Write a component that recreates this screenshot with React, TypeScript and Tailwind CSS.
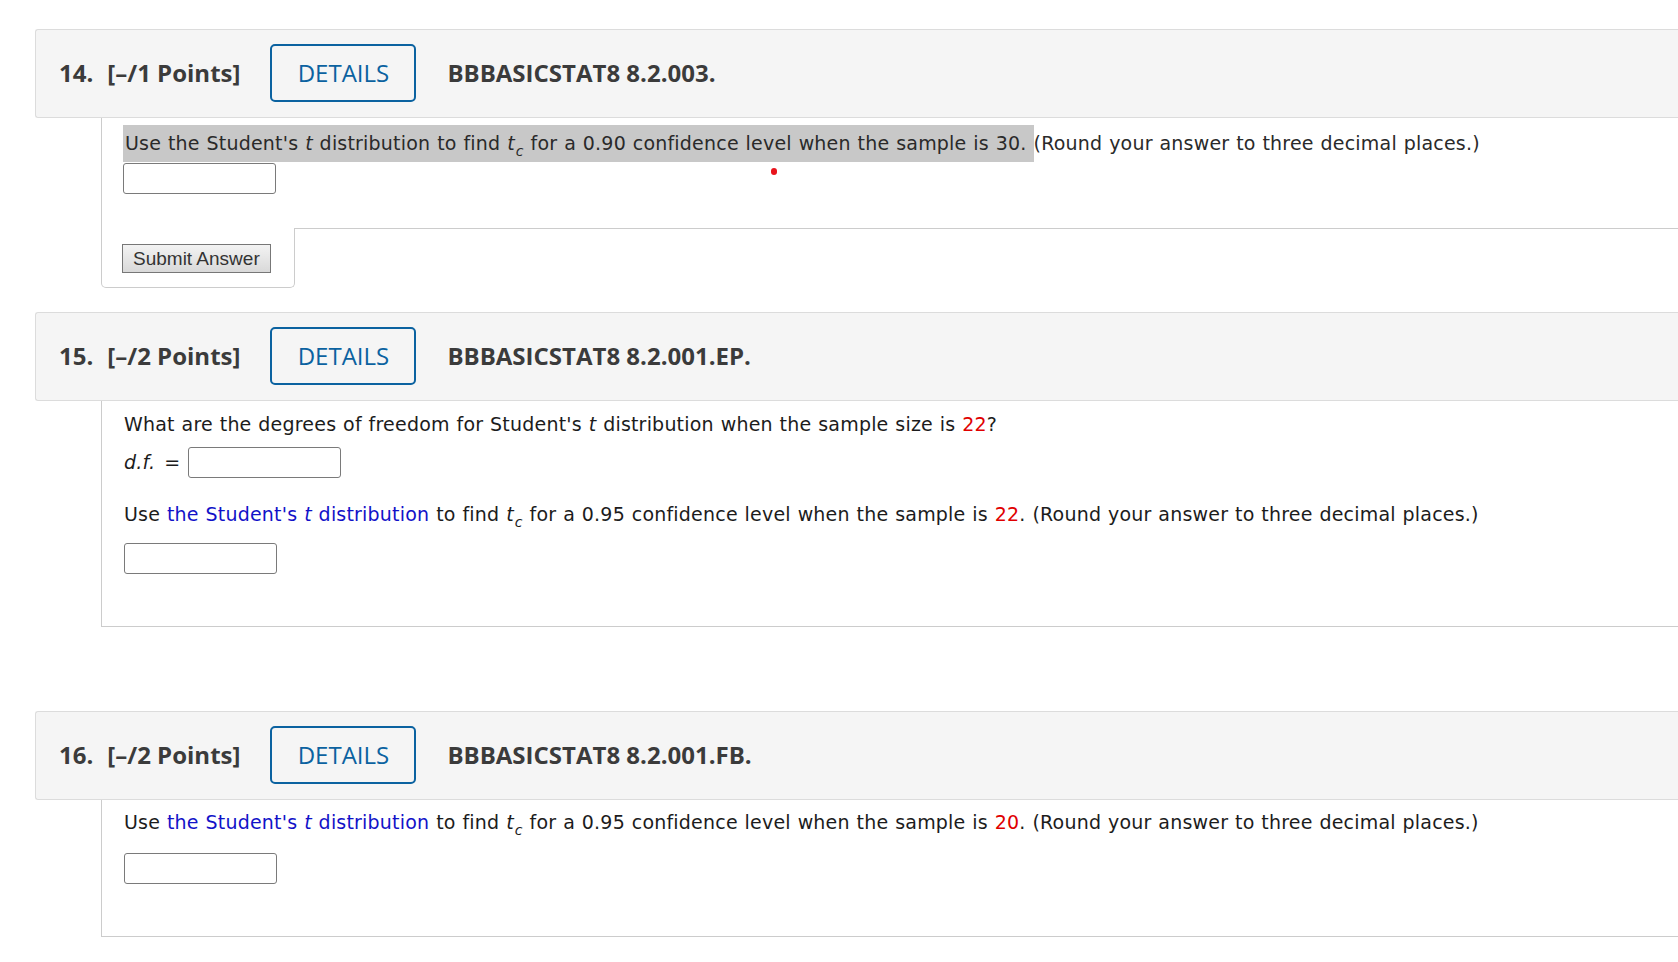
import React from "react";

const headFont = { fontFamily: '"Open Sans", "Noto Sans", sans-serif' };

// header bar of one question
const QuestionHeader = ({ num, points, code }: { num: string; points: string; code: string }) => {
  return (
    <div
      className="ml-[35px] h-[89px] bg-[#f5f5f5] border border-r-0 border-[#dcdcdc] rounded-l-[3px] flex items-center pl-[23px] pb-[1px] text-[#3b3b3b] text-[24px] font-bold tracking-normal [word-spacing:normal]"
      style={headFont}
    >
      <span>{num}</span>
      <span className="ml-[14px]">{points}</span>
      <button className="ml-[30px] w-[146px] h-[58px] border-2 border-[#0b62a0] rounded-[5px] text-[#0b62a0] text-[24px] font-normal flex items-center justify-center">
        DETAILS
      </button>
      <span className="ml-[31px]">{code}</span>
    </div>
  );
};

const AnswerBox = ({ className = "" }: { className?: string }) => (
  <input
    type="text"
    className={"block w-[153px] h-[31px] border border-[#7a7a7a] rounded-[3px] bg-white " + className}
  />
);

const Tc = () => (
  <>
    <i>t</i>
    <sub className="text-[14px] bottom-[-0.45em] ml-[1px] italic">c</sub>
  </>
);

const StudentLink = () => (
  <a className="text-[#1212c8]">
    the Student's <i>t</i> distribution
  </a>
);

const Red = ({ children }: { children: React.ReactNode }) => <span className="text-[#e00000]">{children}</span>;

export default function App() {
  return (
    <div
      className="min-h-screen bg-white pt-[29px] text-[19px] text-[#1c1c1c] tracking-[0.2px] [word-spacing:0.6px] overflow-hidden"
      style={{ fontFamily: '"DejaVu Sans", Verdana, sans-serif' }}
    >
      {/* question 14 */}
      <QuestionHeader num="14." points="[–/1 Points]" code="BBBASICSTAT8 8.2.003." />
      <div className="ml-[101px]">
        <div className="relative border-l border-[#cccccc] pl-[21px] pt-[7px] h-[110px]">
          <p className="leading-[37px] whitespace-nowrap text-[#2a2a2a]">
            <span className="bg-[#c8c8c8] pl-[2px] pr-[7px] inline-block">
              Use the Student's <i>t</i> distribution to find <Tc /> for a 0.90 confidence level when the sample is 30.
            </span>
            (Round your answer to three decimal places.)
          </p>
          <AnswerBox className="mt-[1px]" />
          <span className="absolute left-[669px] top-[50px] w-[6px] h-[7px] rounded-full bg-[#e8141c]" />
        </div>
        <div className="flex">
          <div className="w-[194px] h-[60px] border-l border-r border-b border-[#cccccc] rounded-b-[5px] pl-[20px] pt-[16px]">
            <button
              className="h-[29px] px-[10px] border border-[#777777] bg-gradient-to-b from-[#f3f3f3] to-[#d9d9d9] text-[#333] text-[19px] leading-none tracking-normal [word-spacing:normal]"
              style={{ fontFamily: '"Liberation Sans", Arial, sans-serif' }}
            >
              Submit Answer
            </button>
          </div>
          <div className="flex-1 border-t border-[#cccccc]" />
        </div>
      </div>

      {/* question 15 */}
      <div className="mt-[24px]">
        <QuestionHeader num="15." points="[–/2 Points]" code="BBBASICSTAT8 8.2.001.EP." />
      </div>
      <div className="ml-[101px] border-l border-b border-[#cccccc] pl-[22px] pt-[11px] pb-[52px]">
        <p className="leading-[24px] whitespace-nowrap">
          What are the degrees of freedom for Student's <i>t</i> distribution when the sample size is <Red>22</Red>?
        </p>
        <div className="mt-[11px] flex items-center h-[31px]">
          <i className="mr-[9px]">d.f.</i>
          <span className="mr-[8px]">=</span>
          <AnswerBox />
        </div>
        <p className="mt-[24px] leading-[24px] whitespace-nowrap">
          Use <StudentLink /> to find <Tc /> for a 0.95 confidence level when the sample is <Red>22</Red>. (Round your answer to
          three decimal places.)
        </p>
        <AnswerBox className="mt-[17px]" />
      </div>

      {/* question 16 */}
      <div className="mt-[84px]">
        <QuestionHeader num="16." points="[–/2 Points]" code="BBBASICSTAT8 8.2.001.FB." />
      </div>
      <div className="ml-[101px] border-l border-b border-[#cccccc] pl-[22px] pt-[10px] pb-[52px]">
        <p className="leading-[24px] whitespace-nowrap">
          Use <StudentLink /> to find <Tc /> for a 0.95 confidence level when the sample is <Red>20</Red>. (Round your answer to
          three decimal places.)
        </p>
        <AnswerBox className="mt-[19px]" />
      </div>
    </div>
  );
}
